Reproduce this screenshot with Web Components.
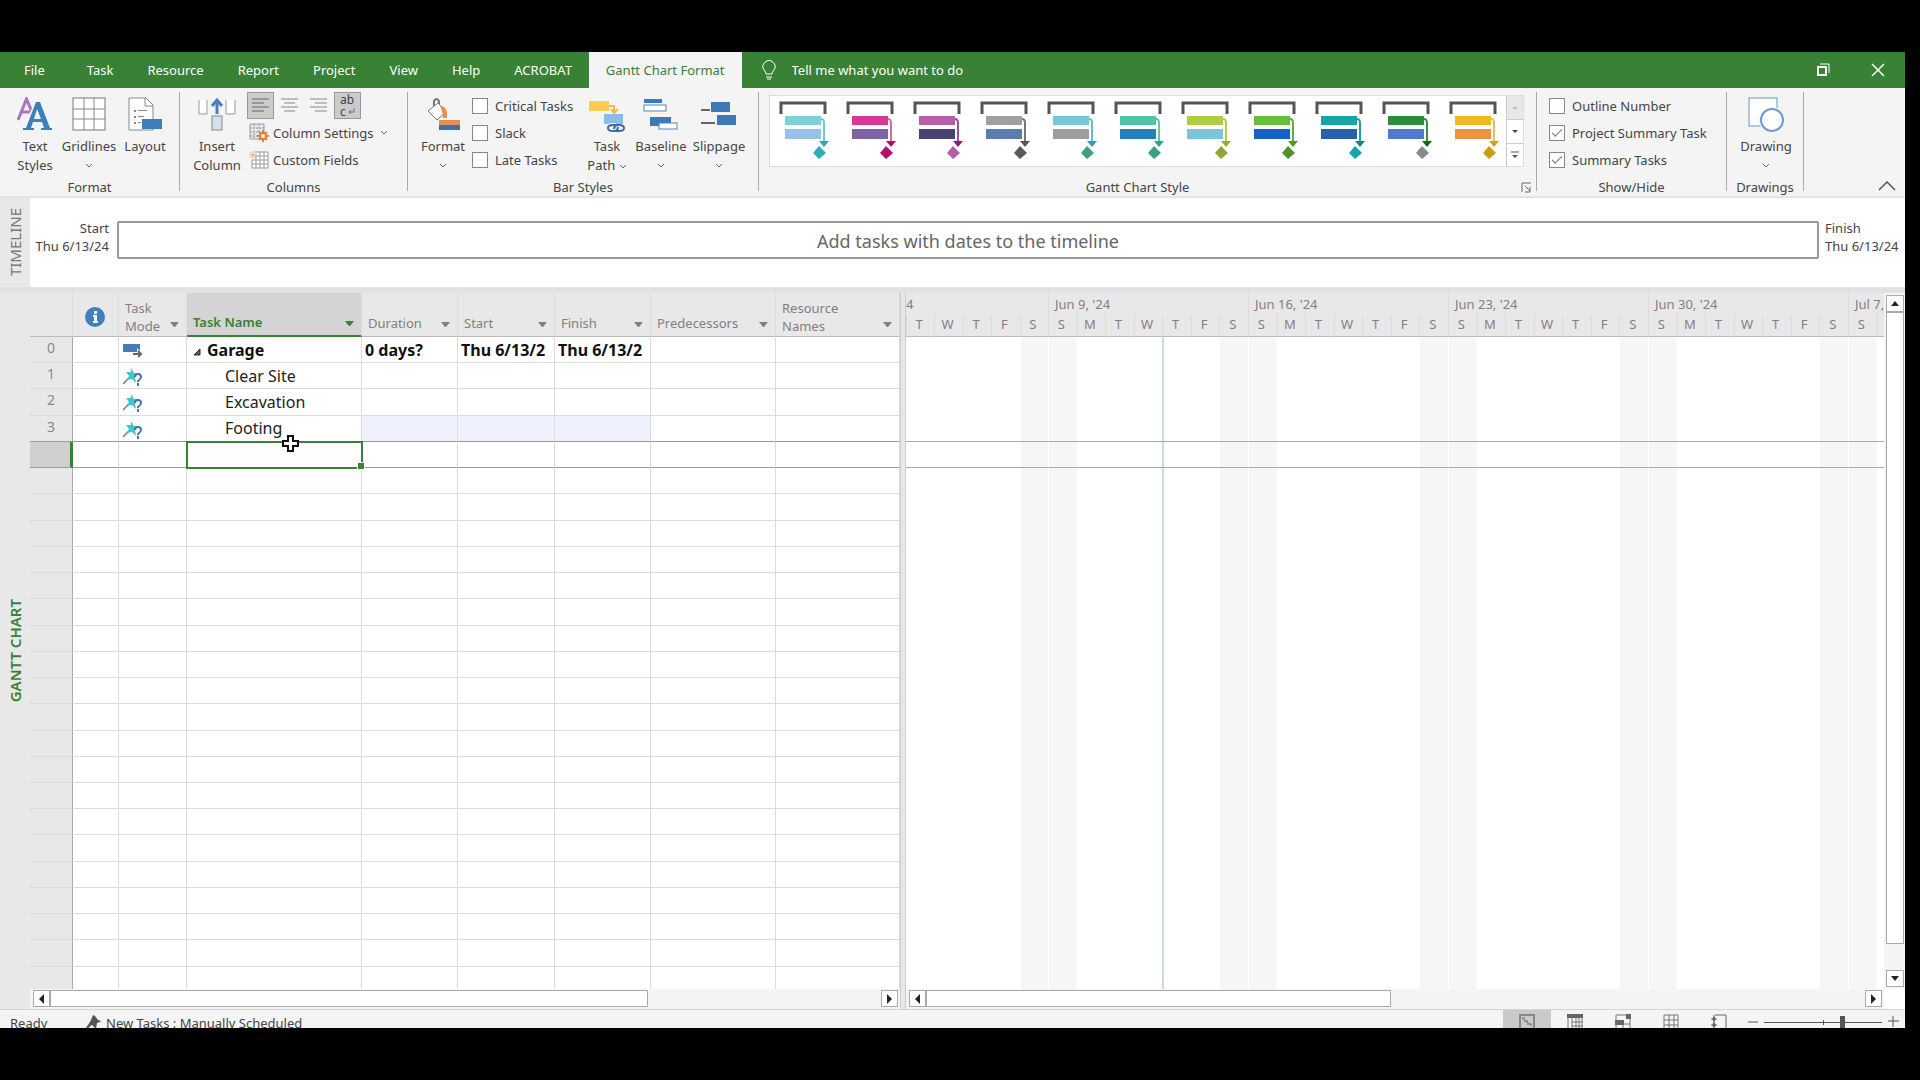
<!DOCTYPE html>
<html lang="en">

<head>
    <meta charset="UTF-8">
    <meta name="viewport" content="width=device-width, initial-scale=1.0">
    <title>Garage - Project</title>
    <style>
        html,
        body {
            height: 100%;
        }

        body {
            --green: #388135;
            --panel: #e8e8e8;
            --ribbon: #f4f4f4;
            --line: #dcdcdc;
            --text: #444;
            box-sizing: border-box;
            margin: 0;
            padding: 52px 15px 52px 0;
            background: #000;
            color: var(--text);
            font: 13px/18px "Noto Sans", "Open Sans", sans-serif;
            overflow: hidden;
        }
    </style>
</head>

<body>
    <project-app></project-app>

    <script>
        // Base class: every element clones its own template into an open shadow root
        class Base extends HTMLElement {
            connectedCallback() {
                if (this.shadowRoot) return;
                const template = document.createElement('template');
                template.innerHTML = `<style>*{box-sizing:border-box}button{font:inherit;color:inherit;background:none;border:0;padding:0;margin:0}${this.css()}</style>${this.html()}`;
                this.attachShadow({ mode: 'open' }).append(template.content.cloneNode(true));
            }
            css() { return ''; }
            html() { return '<slot></slot>'; }
        }

        // name: [width, height, markup]
        const icons = {
            textStyles: [36, 34, `<path d="M1 23 9.500 2 17 20M4 15h9" fill="none" stroke="#a873c4" stroke-width="3"/>
                <path fill="#f4f4f4" d="M4 34 18 5h5l13 29z"/>
                <path fill="#3d7ebf" fill-rule="evenodd" d="M19 5h4l10 26h2v2H24v-2h3l-2-6h-9l-2 6h3v2H6v-2h3zM17 22h7l-4-10z"/>`],
            gridlines: [34, 34, `<rect x="1" y="1" width="32" height="32" fill="#fff" stroke="#777"/><path d="M12 1v32M22 1v32M1 12h32M1 22h32" stroke="#888" fill="none"/>`],
            layout: [34, 34, `<path d="M1 33V1h17l7 7v25z" fill="#fff" stroke="#888"/><path d="M17 1v8h8" fill="none" stroke="#888"/>
                <g fill="#888"><rect x="6" y="13" width="2" height="2"/><rect x="6" y="19" width="2" height="2"/><rect x="6" y="25" width="2" height="2"/><path d="M10 13h9v1h-9zM10 19h6v1h-6zM10 25h3v1h-3z"/></g>
                <rect x="14" y="22" width="20" height="10" fill="#3d7ebf"/>`],
            insertColumn: [38, 34, `<path d="M1 3v14h8V3M28 3v14h9V3" fill="#fff" stroke="#999"/><path d="M19 17V5M14 9l5-6 5 6" fill="none" stroke="#4a7ebb" stroke-width="3"/><rect x="14" y="19" width="10" height="14" fill="#d5dff0" stroke="#888"/>`],
            alignLeft: [17, 15, `<path d="M0 1h17M0 5h12M0 9h17M0 13h12" stroke="#666"/>`],
            alignCenter: [17, 15, `<path d="M0 1h17M3 5h11M0 9h17M3 13h11" stroke="#888"/>`],
            alignRight: [17, 15, `<path d="M0 1h17M5 5h12M0 9h17M5 13h12" stroke="#888"/>`],
            wrap: [8, 7, `<path d="M6 0v4H1M3 2 1 4l2 2" stroke="#3d7ebf" fill="none"/>`],
            columnSettings: [20, 20, `<path d="M1 1h14v15H1z" fill="#e4eaf5" stroke="#999"/><path d="M1 5h14M1 9h9M1 13h7M5 1v15M10 1v8" stroke="#999" fill="none" stroke-dasharray="2 1"/>
                <path d="M14 7v12M8 13h12M10 9l8 8M18 9l-8 8" stroke="#e08033" stroke-width="2"/><circle cx="14" cy="13" r="3" fill="#f4f4f4" stroke="#e08033" stroke-width="2"/>`],
            customFields: [20, 18, `<path d="M6 1h13v16H3V9" fill="#fff" stroke="#999"/><path d="M7 5h12M3 9h16M3 13h16M7 3v14M11 1v16M15 1v16" stroke="#999" fill="none"/><path d="M4 0v8M0 4h8M1 1l6 6M7 1 1 7" stroke="#f0b98a"/>`],
            format: [34, 34, `<path d="M8 10V4q2-4 5 0v9" fill="none" stroke="#777" stroke-width="2"/><path d="m2 14 10-8 8 9-9 8z" fill="#fff" stroke="#777"/><path d="M14 9q8 0 7 12h-4q0-6-3-12z" fill="#e39152"/>
                <rect x="13" y="23" width="21" height="5" fill="#e39152"/><rect x="13" y="28" width="21" height="5" fill="#3d6fa8"/>`],
            taskPath: [36, 36, `<rect y="4" width="20" height="10" fill="#ffcb4d"/><path d="M20 9h5v5M22 12l3 4 4-4" fill="none" stroke="#f3bd45" stroke-width="2"/><rect x="15" y="17" width="19" height="10" fill="#86bdea"/>
                <path d="M27 28h-3q-5 0-5 3t5 3h2q3-1 3-4" fill="none" stroke="#f4f4f4" stroke-width="4"/><path d="M27 28h-3q-5 0-5 3t5 3h2q3-1 3-4M27 34h3q5 0 5-3t-5-3h-2q-3 1-3 4" fill="none" stroke="#3b6ca8" stroke-width="2"/>`],
            baseline: [36, 34, `<rect x="1" y="2" width="18" height="4" fill="#3d78b8"/><rect x="1" y="8" width="22" height="6" fill="#fff" stroke="#4a86c4"/><rect x="7" y="20" width="21" height="9" fill="#3d78b8"/><rect x="16" y="26" width="18" height="6" fill="#fff" stroke="#4a86c4"/>`],
            slippage: [36, 34, `<path d="M0 13h9M0 26h14" stroke="#666" stroke-width="2"/><rect x="10" y="5" width="19" height="10" fill="#3d78b8"/><rect x="16" y="18" width="19" height="10" fill="#3d78b8"/>`],
            drawing: [36, 36, `<rect x="1" y="1" width="28" height="28" fill="#fff" stroke="#5e97d0"/><circle cx="24" cy="23" r="13" fill="#f4f4f4"/><circle cx="24" cy="23" r="11" fill="#fff" stroke="#6d9bd0" stroke-width="2"/>`],
            bulb: [16, 20, `<path d="M5 14q0-2-2-4a6 6 0 1 1 10 0q-2 2-2 4zM5 17h6M6 19h4" fill="none" stroke="#fff"/>`],
            restore: [14, 14, `<path d="M2 4h8v8H2z" fill="none" stroke="#fff" stroke-width="2"/><path d="M4 1h9v9" fill="none" stroke="#fff"/>`],
            close: [14, 14, `<path d="m1 1 12 12M13 1 1 13" stroke="#fff" stroke-width="1.500"/>`],
            chevron: [8, 5, `<path d="m1 1 3 3 3-3" fill="none" stroke="#666"/>`],
            collapse: [18, 10, `<path d="m1 9 8-8 8 8" fill="none" stroke="#555" stroke-width="1.500"/>`],
            up: [8, 5, `<path d="M0 5h8L4 0z" fill="currentColor"/>`],
            down: [8, 5, `<path d="M0 0h8L4 5z" fill="currentColor"/>`],
            left: [5, 10, `<path d="M5 0v10L0 5z" fill="currentColor"/>`],
            right: [5, 10, `<path d="M0 0v10l5-5z" fill="currentColor"/>`],
            galleryUp: [6, 3, `<path d="M0 3h6L3 0z" fill="#bbb"/>`],
            galleryDown: [6, 3, `<path d="M0 0h6L3 3z" fill="#444"/>`],
            more: [8, 8, `<path d="M0 1h8" stroke="#555"/><path d="M1 4h6L4 7z" fill="#555"/>`],
            launcher: [11, 11, `<path d="M1 10V1h9M4 4l5 5M9 5v5H4" fill="none" stroke="#666"/>`],
            filter: [9, 5, `<path d="M0 0h9L5 5H4z" fill="currentColor"/>`],
            info: [20, 20, `<circle cx="10" cy="10" r="10" fill="#4080bd"/><path d="M9 4h3v3H9zM8 8h4v6h1v2H8v-2h1v-4H8z" fill="#fff"/>`],
            auto: [20, 16, `<rect x="0" y="1" width="17" height="8" fill="#4a7ab5"/><path d="M9 9h5V5l6 6-6 5v-4H9z" fill="#fff"/><path d="M10 11h8M15 8l3 3-3 3" fill="none" stroke="#666" stroke-width="2"/>`],
            manual: [20, 18, `<path d="M0 16l7-7" stroke="#777" stroke-width="1.500"/><path d="m8 0 3 5 4 0-3 4 1 6-4-4-6 1 3-4-3-4 5 0z" fill="#3fc8c8"/>
                <path d="M12 9q0-3 3-3t3 3q0 2-3 4v1M15 15v3" fill="none" stroke="#5070b0" stroke-width="2"/>`],
            pin: [16, 15, `<path d="M0 14l6-6" stroke="#555" stroke-width="2"/><path d="m7 0 2 1 3 4 3 1-1 1-3 1-1 6-4-4-5 1 1-1 3-5z" fill="#555"/>`],
            expanded: [8, 8, `<path d="M7 1v6H1z" fill="#555" stroke="#333"/>`],
            cross: [18, 18, `<path d="M6 1h5v5h5v5h-5v5H6v-5H1V6h5z" fill="#fff" stroke="#111" stroke-width="2"/>`],
            viewGantt: [16, 18, `<path d="M1 18V1h14v17" fill="none" stroke="#888" stroke-width="2"/><path d="m3 4 10 8M3 4h3M5 7h4M8 10h5" fill="none" stroke="#777"/>`],
            viewUsage: [16, 18, `<path d="M0 0h16v4H0z" fill="#666"/><path d="M1 4v14M5 4v14M9 4v14M12 4v14M15 4v14M5 8h11M5 12h11" stroke="#777"/>`],
            viewTeam: [16, 18, `<path d="M1 18V1h14v17M1 10h14M8 10v8" fill="none" stroke="#777"/><path d="M0 6h9v5H0zM11 0h5v5h-5z" fill="#666"/>`],
            viewSheet: [16, 18, `<path d="M1 18V1h14v17M1 6h14M1 11h14M6 1v17M11 1v17" fill="none" stroke="#777"/>`],
            viewReport: [16, 18, `<path d="M4 1h11v17M3 1v17M0 5h6M0 11h6" fill="none" stroke="#666"/><path d="m3 2 2 3-2 3-2-3zM3 8l2 3-2 3-2-3z" fill="#666"/>`],
            minus: [10, 10, `<path d="M0 5h10" stroke="#555"/>`],
            plus: [11, 11, `<path d="M0 5h11M5 0v11" stroke="#555"/>`],
        };

        const icon = name => `<ui-icon name="${name}"></ui-icon>`;

        customElements.define('ui-icon', class extends Base {
            css() { return ':host{display:inline-flex;flex:none}svg{display:block}'; }
            html() {
                const [w, h, shapes] = icons[this.getAttribute('name')];
                return `<svg width="${w}" height="${h}" viewBox="0 0 ${w} ${h}" aria-hidden="true">${shapes}</svg>`;
            }
        });

        // ---------- title bar ----------
        customElements.define('tab-bar', class extends Base {
            css() {
                return `:host{display:flex;height:36px;background:var(--green);color:#fff;line-height:36px}
                nav{display:flex}
                button{padding:0 17px}
                .file{padding:0 25px 0 24px}
                .active{background:var(--ribbon);color:var(--green)}
                label{display:flex;align-items:center;gap:15px;margin-left:19px}
                input{width:260px;padding:0;border:0;outline:0;background:none;font:inherit;color:#fff}
                input::placeholder{color:#fff;opacity:1}
                .window{display:flex;margin-left:auto}
                .window button{width:55px;padding:0;display:grid;place-items:center}`;
            }
            html() {
                const tabs = ['Task', 'Resource', 'Report', 'Project', 'View', 'Help', 'ACROBAT'];
                return `<nav><button class="file">File</button>${tabs.map(t => `<button>${t}</button>`).join('')}<button class="active">Gantt Chart Format</button></nav>
                <label>${icon('bulb')}<input type="text" aria-label="Tell me" placeholder="Tell me what you want to do"></label>
                <div class="window"><button aria-label="Restore">${icon('restore')}</button><button aria-label="Close">${icon('close')}</button></div>`;
            }
        });

        // ---------- ribbon ----------
        customElements.define('ribbon-group', class extends Base {
            css() {
                return `:host{display:flex;flex-direction:column;flex:none;margin:4px 0 5px;border-right:1px solid #aaa}
                .body{display:flex;flex:1;min-height:0;padding:0 9px}
                footer{display:flex;align-items:center;height:16px;margin-bottom:-4px}
                footer span{flex:1;text-align:center}
                footer button{width:20px;height:12px;display:grid;place-items:center}`;
            }
            html() {
                return `<div class="body"><slot></slot></div><footer><span>${this.getAttribute('label')}</span>${this.hasAttribute('launcher') ? `<button aria-label="More options">${icon('launcher')}</button>` : ''}</footer>`;
            }
        });

        // Large button: icon above one or two lines of text
        customElements.define('ribbon-button', class extends Base {
            css() {
                return `:host{display:block;flex:none}
                button{width:100%;display:flex;flex-direction:column;align-items:center;padding-top:5px;line-height:19px;white-space:nowrap}
                ui-icon{height:40px}
                .menu{height:19px;display:flex;align-items:center}
                .menu ui-icon{height:5px}
                ::slotted(ui-icon){vertical-align:middle}`;
            }
            html() {
                return `<button>${icon(this.getAttribute('icon'))}<span><slot></slot></span>${this.hasAttribute('menu') ? `<span class="menu">${icon('chevron')}</span>` : ''}</button>`;
            }
        });

        // Small button: icon at the left of its text
        customElements.define('small-button', class extends Base {
            css() {
                return `:host{display:block;height:27px}
                button{height:100%;display:flex;align-items:center;gap:4px;padding-left:2px;white-space:nowrap}
                ui-icon + slot + ui-icon{margin-left:2px}`;
            }
            html() { return `<button>${icon(this.getAttribute('icon'))}<slot></slot>${this.hasAttribute('menu') ? icon('chevron') : ''}</button>`; }
        });

        customElements.define('check-option', class extends Base {
            css() {
                return `:host{display:block;height:27px}
                label{height:100%;display:flex;align-items:center;gap:7px;white-space:nowrap}
                input{appearance:none;width:16px;height:16px;margin:0;border:1px solid #888;background:#fff;display:grid;place-items:center}
                input:checked::before{content:"";width:9px;height:4px;border:solid #777;border-width:0 0 1px 1px;transform:translateY(-1px) rotate(-45deg)}`;
            }
            html() { return `<label><input type="checkbox"${this.hasAttribute('checked') ? ' checked' : ''}><slot></slot></label>`; }
        });

        customElements.define('align-tools', class extends Base {
            css() {
                return `:host{display:flex;gap:2px;height:27px}
                button{width:27px;height:27px;display:grid;place-items:center}
                button[aria-pressed=true]{background:#cbcbcb;border:1px solid #999}
                .wrap{display:flex;flex-direction:column;place-items:start;justify-content:center;padding-left:5px;font-size:12px;line-height:12px}
                .wrap span{display:flex;align-items:center;gap:2px}`;
            }
            html() {
                return `<button aria-label="Align left" aria-pressed="true">${icon('alignLeft')}</button><button aria-label="Center">${icon('alignCenter')}</button><button aria-label="Align right">${icon('alignRight')}</button>
                <button class="wrap" aria-label="Wrap text" aria-pressed="true"><span>ab</span><span>c${icon('wrap')}</span></button>`;
            }
        });

        // task, second task, link, arrow head, milestone
        const chartStyles = [
            ['#80d0d8', '#98c0ea', '#70ccd0', '#2ba8b0', '#35aab2'],
            ['#dc3598', '#7d62a8', '#d86aa8', '#b80868', '#b80d6c'],
            ['#b35fac', '#4a4270', '#9a4f9a', '#881a80', '#b060ac'],
            ['#a0a0a0', '#5c7db0', '#777', '#555', '#595959'],
            ['#76c6d8', '#9e9e9e', '#65bdd0', '#2a9db8', '#3f9f80'],
            ['#50c4a4', '#2880b8', '#60c8a8', '#20a888', '#3f9f86'],
            ['#b0ce40', '#7cc5d8', '#b2cc50', '#94b020', '#8fa53a'],
            ['#6abd3a', '#1860c4', '#60ae40', '#40a018', '#50902f'],
            ['#16a4a8', '#2562a8', '#289ca0', '#108888', '#16a4a8'],
            ['#2a8e38', '#4f7cc8', '#3c9048', '#087010', '#888'],
            ['#f0b920', '#e89444', '#e8be60', '#d8a020', '#cc9a18'],
        ];

        customElements.define('style-gallery', class extends Base {
            css() {
                return `:host{display:flex;flex:1;height:72px;margin:3px 3px 0 1px;border:1px solid #ddd;background:#fff}
                .items{display:flex;flex:1}
                .items button{flex:1;display:grid;justify-items:center;padding:5px 0 0 2px;align-items:start}
                .scroll{display:grid;grid-template-rows:repeat(3,1fr);width:17px;border-left:1px solid #ccc}
                .scroll button{display:grid;place-items:center}
                .scroll button + button{border-top:1px solid #ccc}
                .scroll button:first-child{background:#e8e8e8}`;
            }
            html() {
                const item = ([a, b, link, head, stone]) => `<button aria-label="Chart style"><svg width="50" height="58" viewBox="0 0 50 58">
                    <path d="M2 13V2h44v11" fill="none" stroke="#555" stroke-width="3"/>
                    <rect x="6" y="15" width="36" height="9" fill="${a}"/><rect x="6" y="28" width="36" height="10" fill="${b}"/>
                    <path d="M42 18q3 0 3 4v19" fill="none" stroke="${link}" stroke-width="2"/>
                    <path d="M40 40h10l-5 6z" fill="${head}"/><path d="m40 45 7 7-7 6-6-6z" fill="${stone}"/></svg></button>`;
                return `<div class="items">${chartStyles.map(item).join('')}</div>
                <div class="scroll"><button aria-label="Previous">${icon('galleryUp')}</button><button aria-label="Next">${icon('galleryDown')}</button><button aria-label="More">${icon('more')}</button></div>`;
            }
        });

        customElements.define('ribbon-bar', class extends Base {
            css() {
                return `:host{display:flex;height:110px;background:var(--ribbon);border-bottom:2px solid #e4e4e4}
                .narrow{width:52px}
                .medium{width:56px}
                .wide{width:60px}
                .format{width:180px}
                .columns{width:228px}
                .bars{width:351px}
                .gallery{flex:1}
                .show{width:190px}
                .drawings{width:77px}
                .stack{display:flex;flex-direction:column;padding:0 2px}
                .checks{flex:1;padding-left:3px}
                .collapse{width:101px;display:flex;align-items:flex-end;justify-content:flex-end;padding:0 9px 5px}`;
            }
            html() {
                return `<ribbon-group class="format" label="Format">
                    <ribbon-button class="narrow" icon="textStyles">Text<br>Styles</ribbon-button>
                    <ribbon-button class="medium" icon="gridlines" menu>Gridlines</ribbon-button>
                    <ribbon-button class="medium" icon="layout">Layout</ribbon-button>
                </ribbon-group>
                <ribbon-group class="columns" label="Columns">
                    <ribbon-button class="medium" icon="insertColumn">Insert<br>Column</ribbon-button>
                    <div class="stack">
                        <align-tools></align-tools>
                        <small-button icon="columnSettings" menu>Column Settings</small-button>
                        <small-button icon="customFields">Custom Fields</small-button>
                    </div>
                </ribbon-group>
                <ribbon-group class="bars" label="Bar Styles">
                    <ribbon-button class="narrow" icon="format" menu>Format</ribbon-button>
                    <div class="stack checks">
                        <check-option>Critical Tasks</check-option><check-option>Slack</check-option><check-option>Late Tasks</check-option>
                    </div>
                    <ribbon-button class="narrow" icon="taskPath">Task<br>Path <ui-icon name="chevron"></ui-icon></ribbon-button>
                    <ribbon-button class="medium" icon="baseline" menu>Baseline</ribbon-button>
                    <ribbon-button class="wide" icon="slippage" menu>Slippage</ribbon-button>
                </ribbon-group>
                <ribbon-group class="gallery" label="Gantt Chart Style" launcher><style-gallery></style-gallery></ribbon-group>
                <ribbon-group class="show" label="Show/Hide">
                    <div class="stack checks">
                        <check-option>Outline Number</check-option><check-option checked>Project Summary Task</check-option><check-option checked>Summary Tasks</check-option>
                    </div>
                </ribbon-group>
                <ribbon-group class="drawings" label="Drawings"><ribbon-button class="wide" icon="drawing" menu>Drawing</ribbon-button></ribbon-group>
                <button class="collapse" aria-label="Collapse the ribbon">${icon('collapse')}</button>`;
            }
        });

        // ---------- timeline ----------
        customElements.define('view-label', class extends Base {
            css() {
                return `:host{display:flex;align-items:center;justify-content:center;width:30px;background:var(--panel);color:#777;font-size:15px}
                span{writing-mode:vertical-rl;transform:rotate(180deg);white-space:nowrap}`;
            }
            html() { return '<span><slot></slot></span>'; }
        });

        customElements.define('time-line', class extends Base {
            css() {
                return `:host{display:flex;height:89px;background:#fff}
                p{margin:21px 0 0;width:79px;text-align:right;flex:none}
                .finish{text-align:left;margin-left:6px;width:80px}
                .box{flex:1;height:38px;margin:23px 0 0 8px;border:2px solid #999;border-radius:2px;line-height:36px;text-align:center;font-size:18px;color:#666}`;
            }
            html() {
                return `<view-label>TIMELINE</view-label><p>Start<br>Thu 6/13/24</p><div class="box">Add tasks with dates to the timeline</div><p class="finish">Finish<br>Thu 6/13/24</p>`;
            }
        });

        // ---------- task sheet ----------
        const columns = [
            { width: 43 }, { width: 46, icon: 'info' }, { width: 68, label: 'Task<br>Mode' }, { width: 175, label: 'Task Name', active: true },
            { width: 96, label: 'Duration' }, { width: 97, label: 'Start' }, { width: 96, label: 'Finish' },
            { width: 125, label: 'Predecessors' }, { width: 124, label: 'Resource<br>Names' },
        ];
        const tasks = [
            { mode: 'auto', name: 'Garage', cells: ['0 days?', 'Thu 6/13/2', 'Thu 6/13/2'], kind: 'summary' },
            { mode: 'manual', name: 'Clear Site' },
            { mode: 'manual', name: 'Excavation' },
            { mode: 'manual', name: 'Footing', kind: 'changed' },
        ];
        const rowCount = 25;
        const selectedRow = 4;

        customElements.define('task-sheet', class extends Base {
            css() {
                return `:host{display:block;position:relative;background:#fff;color:#222;font-size:16px}
                table{width:100%;height:100%;table-layout:fixed;border-collapse:separate;border-spacing:0}
                th,td{padding:0;border:solid var(--line);border-width:0 1px 1px 0;overflow:hidden;white-space:nowrap;text-align:left}
                thead tr{height:44px}
                thead th{background:var(--panel);color:#808080;font-size:13px;font-weight:400;border-bottom-color:#bbb}
                thead div{display:flex;align-items:flex-end;justify-content:space-between;height:42px;padding:0 7px 4px 6px}
                thead ui-icon{margin-bottom:5px}
                thead span:has(br){margin-bottom:-3px}
                thead .active{background:#d4d4d4;color:var(--green);font-weight:600;border-bottom:2px solid var(--green)}
                thead .info{justify-content:center}
                tbody tr{height:26px}
                tbody tr:last-child{height:22px}
                tbody tr:last-child > *{border-bottom:0}
                tbody th{background:var(--panel);color:#888;font-size:14px;font-weight:400;text-align:center;vertical-align:top;line-height:22px;border-right:1px solid #aaa}
                td{padding-left:3px;line-height:20px}
                td:nth-child(3){padding-left:4px}
                td ui-icon{vertical-align:middle}
                td.name{padding-left:38px}
                .summary td{font-weight:700;color:#111}
                .summary td.name{padding-left:6px}
                .summary .name ui-icon{margin-right:6px;vertical-align:baseline}
                .changed td:nth-child(n+5):nth-child(-n+7){background:#eff2fd}
                .before > *,.selected > *{border-bottom-color:#999}
                .selected th{background:#cfcfcf;border-right:3px solid var(--green)}
                .selected .name{position:relative;overflow:visible;outline:2px solid var(--green);outline-offset:-1px}
                .selected .name::after{content:"";position:absolute;right:-4px;bottom:-3px;width:6px;height:6px;background:var(--green);border:1px solid #fff;box-sizing:content-box}
                .pointer{position:absolute;left:252px;top:142px}`;
            }
            html() {
                const head = c => {
                    if (c.icon) return `<th><div class="info">${icon(c.icon)}</div></th>`;
                    return c.label ? `<th${c.active ? ' class="active"' : ''}><div><span>${c.label}</span>${icon('filter')}</div></th>` : '<th></th>';
                };
                const row = (_, i) => {
                    const task = tasks[i] || {};
                    const kinds = [task.kind, i === selectedRow && 'selected', i === selectedRow - 1 && 'before'].filter(Boolean).join(' ');
                    const cells = Array.from({ length: 5 }, (_, n) => `<td>${task.cells?.[n] || ''}</td>`).join('');
                    return `<tr class="${kinds}"><th>${tasks[i] ? i : ''}</th><td></td><td>${task.mode ? icon(task.mode) : ''}</td>
                        <td class="name">${task.kind === 'summary' ? icon('expanded') : ''}${task.name || ''}</td>${cells}</tr>`;
                };
                return `<table><colgroup>${columns.map(c => `<col style="width:${c.width}px">`).join('')}</colgroup>
                    <thead><tr>${columns.map(head).join('')}</tr></thead><tbody>${Array.from({ length: rowCount }, row).join('')}</tbody></table>
                    <ui-icon class="pointer" name="cross"></ui-icon>`;
            }
        });

        // ---------- chart ----------
        const weeks = [
            { label: '4', days: 'TWTFS', first: true }, { label: "Jun 9, '24", days: 'SMTWTFS', now: 4 }, { label: "Jun 16, '24", days: 'SMTWTFS' },
            { label: "Jun 23, '24", days: 'SMTWTFS' }, { label: "Jun 30, '24", days: 'SMTWTFS' }, { label: 'Jul 7,', days: 'SMTWTFS' },
        ];

        customElements.define('gantt-chart', class extends Base {
            css() {
                return `:host{display:flex;position:relative;overflow:hidden;background:#fff;color:#808080}
                section{flex:none;width:200px;display:grid;grid-template:22px 22px 1fr / repeat(7,1fr)}
                section.first{width:142px;grid-template-columns:repeat(5,1fr)}
                h3{grid-column:1/-1;margin:0;padding:2px 0 0 6px;background:var(--panel);border-left:1px solid var(--line);font:inherit;white-space:nowrap;overflow:hidden}
                .first h3{padding-left:0;border:0}
                .day{padding-right:3px;background:var(--panel);border-bottom:1px solid #bbb;border-left:1px solid var(--line);text-align:center;line-height:19px}
                .col.off{background:#f6f6f6;border-left:1px solid #fff}
                .col.now{border-left:2px solid #c8dfc8}
                .rows{position:absolute;inset:44px 0 0;display:grid;grid-template-rows:repeat(24,26fr) 22fr}
                .rows i{grid-row:5;margin-top:-1px;border:solid #aaa;border-width:1px 0}`;
            }
            html() {
                const week = w => {
                    const days = [...w.days];
                    const col = (d, i) => `<div class="col${d === 'S' ? ' off' : ''}${i === w.now ? ' now' : ''}"></div>`;
                    return `<section${w.first ? ' class="first"' : ''}><h3>${w.label}</h3>${days.map(d => `<div class="day">${d}</div>`).join('')}${days.map(col).join('')}</section>`;
                };
                return `${weeks.map(week).join('')}<div class="rows"><i></i></div>`;
            }
        });

        // thumb = share of the track in percent
        customElements.define('scroll-bar', class extends Base {
            css() {
                return `:host{display:flex;padding:1px 2px 2px 3px;background:var(--ribbon);color:#222}
                :host([vertical]){flex-direction:column;padding:2px 1px 2px 2px}
                button{flex:none;width:17px;height:17px;border:1px solid #aaa;background:#fff;display:grid;place-items:center}
                :host([vertical]) button{width:auto}
                .track{flex:1;display:flex;flex-direction:inherit}
                .thumb{flex:0 0 var(--thumb);border:1px solid #aaa;background:#fff}`;
            }
            html() {
                const [a, b] = this.hasAttribute('vertical') ? ['up', 'down'] : ['left', 'right'];
                return `<button aria-label="Scroll ${a}">${icon(a)}</button><div class="track" style="--thumb:${this.getAttribute('thumb')}%"><div class="thumb"></div></div><button aria-label="Scroll ${b}">${icon(b)}</button>`;
            }
        });

        customElements.define('work-space', class extends Base {
            css() {
                return `:host{display:grid;grid-template:1fr 20px / 30px 870px 6px 1fr 21px;min-height:0;border-top:6px solid #e2e2e2;background:var(--ribbon)}
                view-label{grid-row:1/3;color:var(--green);font-weight:600}
                .split{grid-row:1/3;grid-column:3;background:var(--panel);border:solid #ccc;border-width:0 1px}
                task-sheet,gantt-chart{min-height:0;min-width:0}
                .corner{background:#fff}`;
            }
            html() {
                return `<view-label>GANTT CHART</view-label><task-sheet></task-sheet><div class="split"></div><gantt-chart></gantt-chart><scroll-bar vertical thumb="96"></scroll-bar>
                <scroll-bar thumb="72"></scroll-bar><scroll-bar thumb="49.5"></scroll-bar><div class="corner"></div>`;
            }
        });

        // ---------- status bar ----------
        customElements.define('status-bar', class extends Base {
            css() {
                return `:host{display:flex;height:19px;overflow:hidden;background:var(--ribbon);border-top:1px solid #d4d4d4;line-height:26px}
                .ready{width:76px;padding-left:10px}
                .new{display:flex;gap:4px;height:26px;padding-left:10px}
                .new ui-icon{margin-top:5px}
                .views{display:flex;margin-left:auto}
                .views button{width:48px;height:26px;display:flex;justify-content:center;padding-top:4px}
                .views .on{background:#cacaca}
                .zoom{display:flex;align-items:center;gap:6px;height:24px;padding:0 6px 0 5px}
                input{appearance:none;width:118px;height:13px;margin:0;background:linear-gradient(#555,#555) 50% 50%/1px 5px no-repeat,linear-gradient(#555,#555) 0 50%/100% 1px no-repeat}
                input::-webkit-slider-thumb{appearance:none;width:5px;height:13px;background:#555}`;
            }
            html() {
                const views = { viewGantt: 'Gantt Chart', viewUsage: 'Task Usage', viewTeam: 'Team Planner', viewSheet: 'Resource Sheet', viewReport: 'Report' };
                return `<span class="ready">Ready</span><button class="new">${icon('pin')}New Tasks : Manually Scheduled</button>
                <div class="views">${Object.entries(views).map(([name, label], i) => `<button aria-label="${label}"${i ? '' : ' class="on"'}>${icon(name)}</button>`).join('')}</div>
                <div class="zoom"><button aria-label="Zoom out">${icon('minus')}</button><input type="range" aria-label="Zoom" value="67"><button aria-label="Zoom in">${icon('plus')}</button></div>`;
            }
        });

        customElements.define('project-app', class extends Base {
            css() { return ':host{display:flex;flex-direction:column;height:100%;overflow:hidden}work-space{flex:1}tab-bar,ribbon-bar,time-line,status-bar{flex:none}'; }
            html() { return '<tab-bar></tab-bar><ribbon-bar></ribbon-bar><time-line></time-line><work-space></work-space><status-bar></status-bar>'; }
        });
    </script>
</body>

</html>
